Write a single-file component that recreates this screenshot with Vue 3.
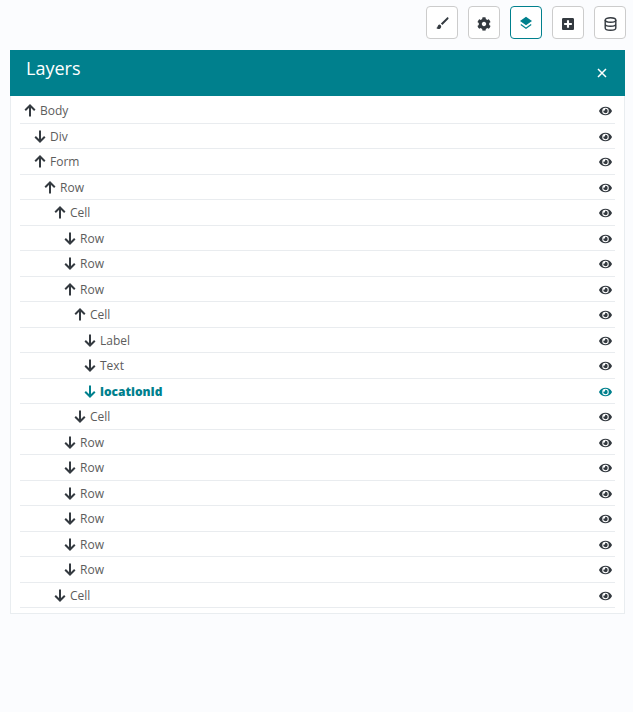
<template>
  <div class="page">
    <div class="toolbar">
      <button class="tool">
        <svg width="13" height="13" viewBox="0 0 13 13"><path d="M12.100.5c-.4-.3-.9-.2-1.300.2L4.900 6.600l1.500 1.500 5.900-6c.4-.4.300-1.200-.2-1.600zM3.600 7.400C2.300 7.600 1.900 8.500 1.600 9.600c-.2.900-.6 1.300-1.300 1.500.9.900 2.900 1.300 4 .3.900-.8 1.100-1.800.7-2.700-.2-.7-.7-1.200-1.400-1.300z" fill="#343a40"/></svg>
      </button>
      <button class="tool">
        <svg width="14" height="14" viewBox="0 0 512 512"><path fill="#343a40" d="M487.400 315.700l-42.600-24.600c4.300-23.200 4.300-47 0-70.200l42.600-24.600c4.900-2.800 7.100-8.600 5.500-14-11.100-35.600-30-67.800-54.700-94.600-3.800-4.100-10-5.100-14.800-2.300L380.800 110c-17.900-15.400-38.500-27.300-60.800-35.100V25.800c0-5.600-3.900-10.500-9.400-11.700-36.700-8.200-74.300-7.800-109.200 0-5.500 1.200-9.400 6.100-9.400 11.700V75c-22.200 7.900-42.800 19.800-60.800 35.100L88.700 85.500c-4.900-2.800-11-1.900-14.800 2.300-24.700 26.700-43.600 58.900-54.700 94.600-1.700 5.400.6 11.200 5.500 14L67.300 221c-4.300 23.200-4.300 47 0 70.200l-42.600 24.600c-4.900 2.800-7.100 8.600-5.500 14 11.100 35.600 30 67.800 54.700 94.600 3.800 4.100 10 5.100 14.800 2.300l42.600-24.600c17.900 15.400 38.500 27.300 60.800 35.100v49.200c0 5.600 3.900 10.500 9.400 11.700 36.700 8.200 74.300 7.800 109.200 0 5.500-1.200 9.400-6.100 9.400-11.700v-49.200c22.200-7.900 42.800-19.800 60.800-35.100l42.600 24.600c4.900 2.800 11 1.900 14.800-2.300 24.700-26.700 43.600-58.900 54.700-94.600 1.500-5.500-.7-11.300-5.600-14.100zM256 336c-44.100 0-80-35.900-80-80s35.900-80 80-80 80 35.900 80 80-35.900 80-80 80z"/></svg>
      </button>
      <button class="tool tool--active">
        <svg width="14" height="14" viewBox="0 0 14 14"><path d="M7 .8 13 5 7 9.200 1 5z" fill="#00808d"/><path d="M1.800 8.600 7 12.300l5.200-3.700" fill="none" stroke="#00808d" stroke-width="1.200"/></svg>
      </button>
      <button class="tool">
        <svg width="12" height="12" viewBox="0 32 448 448"><path fill="#343a40" d="M400 32H48C21.500 32 0 53.500 0 80v352c0 26.500 21.500 48 48 48h352c26.500 0 48-21.500 48-48V80c0-26.500-21.500-48-48-48zm-32 252c0 6.600-5.400 12-12 12h-92v92c0 6.600-5.400 12-12 12h-56c-6.600 0-12-5.400-12-12v-92H92c-6.600 0-12-5.400-12-12v-56c0-6.600 5.400-12 12-12h92v-92c0-6.600 5.400-12 12-12h56c6.600 0 12 5.400 12 12v92h92c6.600 0 12 5.400 12 12v56z"/></svg>
      </button>
      <button class="tool">
        <svg width="13" height="14" viewBox="0 0 13 14" fill="none" stroke="#343a40" stroke-width="1.400"><ellipse cx="6.500" cy="3" rx="5.300" ry="2.300"/><path d="M1.200 3v8c0 1.300 2.400 2.300 5.300 2.300s5.300-1 5.300-2.300V3M1.200 7c0 1.300 2.400 2.300 5.300 2.300S11.800 8.300 11.800 7"/></svg>
      </button>
    </div>

    <section class="panel">
      <header class="panel__head">
        <h2 class="panel__title">Layers</h2>
        <svg class="panel__close" width="10" height="10" viewBox="0 0 10 10"><path d="M1 1l8 8M9 1 1 9" stroke="#fff" stroke-width="1.500" fill="none"/></svg>
      </header>
      <ul class="tree">
        <li
          v-for="(row, i) in rows"
          :key="i"
          class="tree__row"
          :class="{ 'tree__row--active': row.active }"
        >
          <span class="tree__label" :style="{ paddingLeft: row.depth * 10 + 'px' }">
            <svg class="tree__arrow" width="12" height="13" viewBox="0 0 12 13" fill="none" stroke="currentColor" stroke-width="2">
              <path v-if="row.up" d="M6 12.500V1.500M1.200 6.200 6 1.500l4.800 4.700" />
              <path v-else d="M6 .5v11M1.200 6.800 6 11.500l4.800-4.700" />
            </svg>
            {{ row.name }}
          </span>
          <svg class="tree__eye" width="13" height="12" viewBox="0 0 576 512"><path fill="currentColor" d="M572.520 241.400C518.290 135.590 410.930 64 288 64S57.680 135.640 3.480 241.410a32.350 32.350 0 0 0 0 29.190C57.710 376.410 165.070 448 288 448s230.320-71.640 284.520-177.410a32.350 32.350 0 0 0 0-29.190zM288 400a144 144 0 1 1 144-144 143.930 143.930 0 0 1-144 144zm0-240a95.310 95.310 0 0 0-25.310 3.790 47.850 47.850 0 0 1-66.900 66.900A95.780 95.780 0 1 0 288 160z"/></svg>
        </li>
      </ul>
    </section>
  </div>
</template>

<script setup>
const rows = [
  { name: 'Body', depth: 0, up: true },
  { name: 'Div', depth: 1 },
  { name: 'Form', depth: 1, up: true },
  { name: 'Row', depth: 2, up: true },
  { name: 'Cell', depth: 3, up: true },
  { name: 'Row', depth: 4 },
  { name: 'Row', depth: 4 },
  { name: 'Row', depth: 4, up: true },
  { name: 'Cell', depth: 5, up: true },
  { name: 'Label', depth: 6 },
  { name: 'Text', depth: 6 },
  { name: 'locationId', depth: 6, active: true },
  { name: 'Cell', depth: 5 },
  { name: 'Row', depth: 4 },
  { name: 'Row', depth: 4 },
  { name: 'Row', depth: 4 },
  { name: 'Row', depth: 4 },
  { name: 'Row', depth: 4 },
  { name: 'Row', depth: 4 },
  { name: 'Cell', depth: 3 }
]
</script>

<style>
html,
body {
  background: #fbfcfe;
}
</style>

<style scoped>
.page {
  height: 712px;
  overflow: hidden;
  padding: 6px 7px 0 10px;
  box-sizing: border-box;
  font-family: "Open Sans", sans-serif;
}

.toolbar {
  display: flex;
  justify-content: flex-end;
  gap: 10px;
  margin-bottom: 11px;
}

.tool {
  width: 32px;
  height: 33px;
  padding: 2px 0 0;
  display: flex;
  align-items: center;
  justify-content: center;
  background: #fff;
  border: 1px solid #ccc;
  border-radius: 4px;
}

.tool--active {
  border-color: #00808d;
  padding-top: 0;
}

.panel {
  width: 615px;
  box-sizing: border-box;
  background: #fff;
  border: 1px solid #e9edf0;
  border-top: 0;
  padding-bottom: 5px;
}

.panel__head {
  height: 46px;
  margin: 0 -1px;
  padding: 8px 18px 0 16px;
  box-sizing: border-box;
  background: #00808d;
  display: flex;
  justify-content: space-between;
  color: #fff;
}

.panel__title {
  margin: 0;
  font-size: 18px;
  font-weight: 400;
  line-height: 21px;
}

.panel__close {
  margin-top: 10px;
}

.tree {
  list-style: none;
  margin: 2px 9px 0;
  padding: 0;
}

.tree__row {
  height: 25.5px;
  box-sizing: border-box;
  padding: 1px 3px 0 4px;
  display: flex;
  align-items: center;
  justify-content: space-between;
  border-bottom: 1px solid #e9ecef;
  color: #5c5c5c;
  font-size: 12px;
}

.tree__row--active {
  color: #00808d;
  font-weight: 800;
}

.tree__label {
  display: flex;
  align-items: center;
  gap: 4px;
}

.tree__arrow {
  color: #343a40;
}

.tree__row--active .tree__arrow {
  color: #00808d;
}

.tree__eye {
  color: #343a40;
  margin-top: 1px;
}

.tree__row--active .tree__eye {
  color: #00808d;
}
</style>
